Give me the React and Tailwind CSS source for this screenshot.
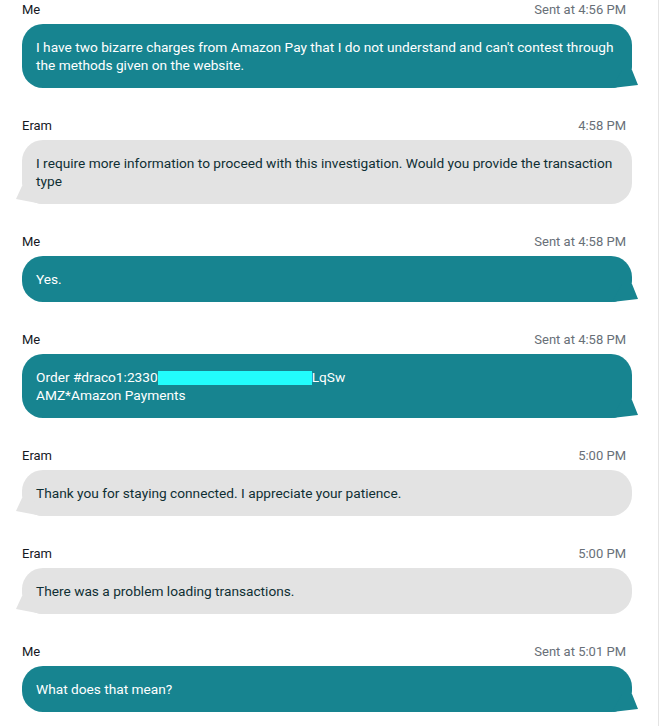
const messages = [
  { from: 'Me', time: 'Sent at 4:56 PM', text: ["I have two bizarre charges from Amazon Pay that I do not understand and can't contest through the methods given on the website."] },
  { from: 'Eram', time: '4:58 PM', text: ['I require more information to proceed with this investigation. Would you provide the transaction type'] },
  { from: 'Me', time: 'Sent at 4:58 PM', text: ['Yes.'] },
  { from: 'Me', time: 'Sent at 4:58 PM', order: true },
  { from: 'Eram', time: '5:00 PM', text: ['Thank you for staying connected. I appreciate your patience.'] },
  { from: 'Eram', time: '5:00 PM', text: ['There was a problem loading transactions.'] },
  { from: 'Me', time: 'Sent at 5:01 PM', text: ['What does that mean?'] },
]

function Tail({ mine }) {
  if (mine) {
    return (
      <svg className="absolute right-[-6px] bottom-0" width="26" height="18" viewBox="0 0 26 18">
        <path d="M10 0 L20 0 L26 15 L0 18 Z" fill="#178490" />
      </svg>
    )
  }
  return (
    <svg className="absolute left-[-6px] bottom-0" width="26" height="18" viewBox="0 0 26 18">
      <path d="M16 0 L6 0 L0 13 L26 18 Z" fill="#e3e3e3" />
    </svg>
  )
}

function Message({ msg }) {
  const mine = msg.from === 'Me'
  return (
    <div>
      <div className="flex justify-between pr-[6px] text-[13px] leading-[19px] mb-[5px]">
        <span className="text-[#16191f]">{msg.from}</span>
        <span className="text-[#687078]">{msg.time}</span>
      </div>
      <div
        className={`relative rounded-[21px] px-[14px] py-[14px] text-[13.7px] leading-[18px] ${
          mine ? 'bg-[#178490] text-white' : 'bg-[#e3e3e3] text-[#0f2f33]'
        }`}
      >
        <div className="relative z-10">
          {msg.order ? (
            <>
              <div>
                Order #draco1:2330
                <span className="inline-block align-middle w-[154px] h-[14px] bg-[#22fcfc]" />
                LqSw
              </div>
              <div>AMZ*Amazon Payments</div>
            </>
          ) : (
            msg.text.map((t, i) => <div key={i}>{t}</div>)
          )}
        </div>
        <Tail mine={mine} />
      </div>
    </div>
  )
}

export default function App() {
  return (
    <div className="w-[659px] min-h-[726px] border-r border-[#e4e4e4] bg-white" style={{ fontFamily: 'Roboto, "Noto Sans", sans-serif' }}>
      <div className="pl-[22px] pr-[26px] flex flex-col gap-[28px]">
        {messages.map((m, i) => (
          <Message key={i} msg={m} />
        ))}
      </div>
    </div>
  )
}
